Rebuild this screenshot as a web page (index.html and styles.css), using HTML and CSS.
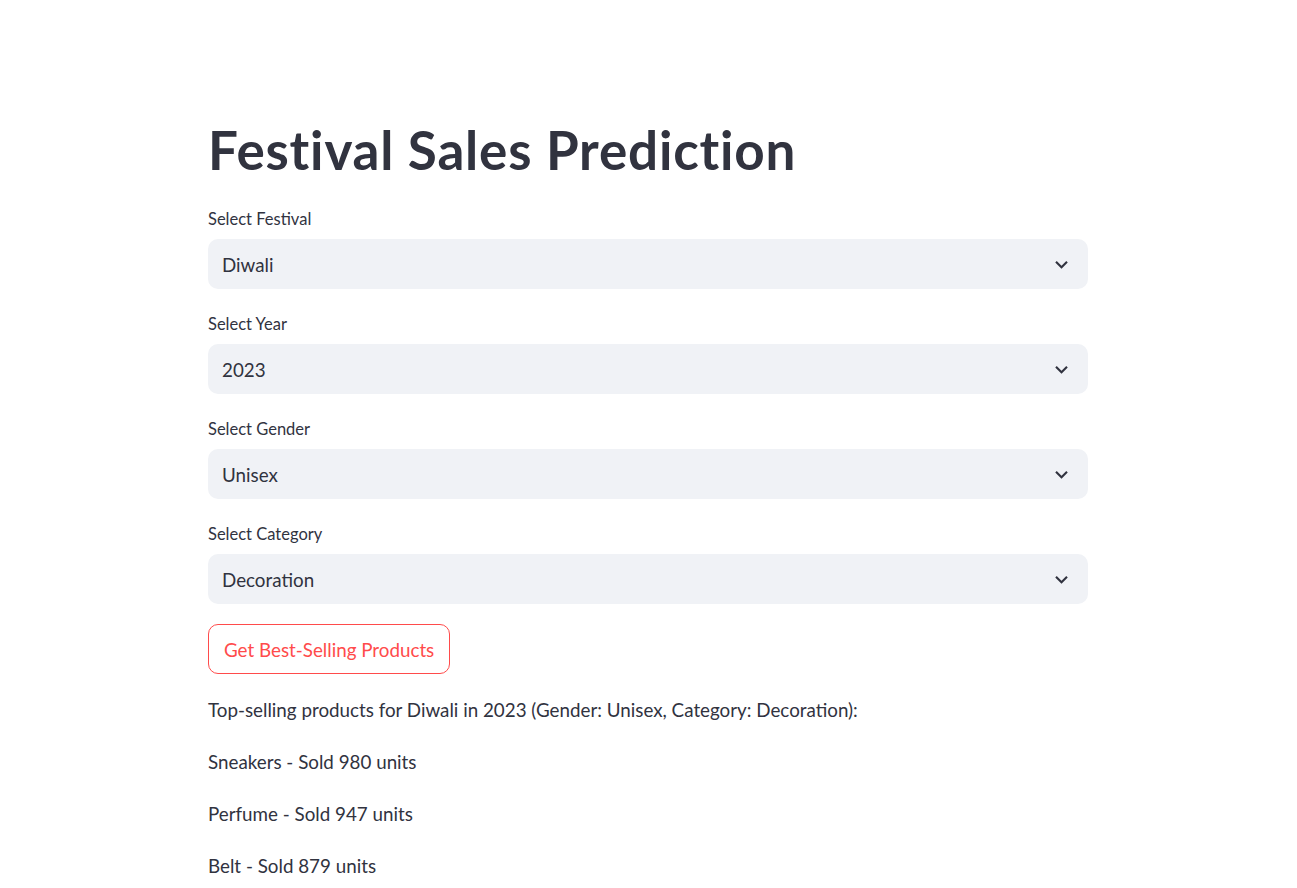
FILE: index.html
```html
<!DOCTYPE html>
<html lang="en">
<head>
<meta charset="utf-8">
<title>Festival Sales Prediction</title>
<link rel="stylesheet" href="styles.css">
</head>
<body>
<main class="app">
  <h1 class="title">Festival Sales Prediction</h1>

  <div class="widget">
    <label class="label">Select Festival</label>
    <div class="select"><span class="value">Diwali</span>
      <svg class="chev" viewBox="0 0 24 24"><path d="M16.59 8.59L12 13.17 7.41 8.59 6 10l6 6 6-6z"/></svg></div>
  </div>

  <div class="widget">
    <label class="label">Select Year</label>
    <div class="select"><span class="value">2023</span>
      <svg class="chev" viewBox="0 0 24 24"><path d="M16.59 8.59L12 13.17 7.41 8.59 6 10l6 6 6-6z"/></svg></div>
  </div>

  <div class="widget">
    <label class="label">Select Gender</label>
    <div class="select"><span class="value">Unisex</span>
      <svg class="chev" viewBox="0 0 24 24"><path d="M16.59 8.59L12 13.17 7.41 8.59 6 10l6 6 6-6z"/></svg></div>
  </div>

  <div class="widget">
    <label class="label">Select Category</label>
    <div class="select"><span class="value">Decoration</span>
      <svg class="chev" viewBox="0 0 24 24"><path d="M16.59 8.59L12 13.17 7.41 8.59 6 10l6 6 6-6z"/></svg></div>
  </div>

  <button class="btn">Get Best-Selling Products</button>

  <div class="results">
    <p>Top-selling products for Diwali in 2023 (Gender: Unisex, Category: Decoration):</p>
    <p>Sneakers - Sold 980 units</p>
    <p>Perfume - Sold 947 units</p>
    <p>Belt - Sold 879 units</p>
  </div>
</main>
</body>
</html>
```

FILE: styles.css
```css
html, body {
  margin: 0;
  padding: 0;
  background: #ffffff;
}
body {
  font-family: "Lato", "Liberation Sans", sans-serif;
  color: rgb(49, 51, 63);
  padding-right: 1px;
}
.app {
  width: 880px;
  margin: 0 auto;
  padding-top: 116px;
  display: flex;
  flex-direction: column;
}
.title {
  margin: 0 0 24px 0;
  font-size: 53px;
  letter-spacing: 0.8px;
  line-height: 67px;
  font-weight: 700;
  color: rgb(49, 51, 63);
}
.widget {
  display: flex;
  flex-direction: column;
  margin-bottom: 23px;
}
.label {
  font-size: 16.5px;
  line-height: 24px;
  height: 24px;
  margin-bottom: 8px;
}
.select {
  height: 50px;
  background: rgb(240, 242, 246);
  border-radius: 10px;
  display: flex;
  align-items: center;
  justify-content: space-between;
  padding: 0 14px;
  box-sizing: border-box;
}
.value {
  font-size: 18.8px;
}
.chev {
  width: 25px;
  height: 25px;
  fill: rgb(49, 51, 63);
}
.btn {
  align-self: flex-start;
  margin-top: -3px;
  height: 50px;
  padding: 0 15px;
  background: #ffffff;
  border: 1px solid rgb(255, 75, 75);
  border-radius: 10px;
  color: rgb(255, 75, 75);
  font-family: inherit;
  font-size: 18.8px;
}
.results {
  margin-top: 20px;
}
.results p {
  margin: 0 0 20px 0;
  font-size: 18.8px;
  line-height: 32px;
}
```
